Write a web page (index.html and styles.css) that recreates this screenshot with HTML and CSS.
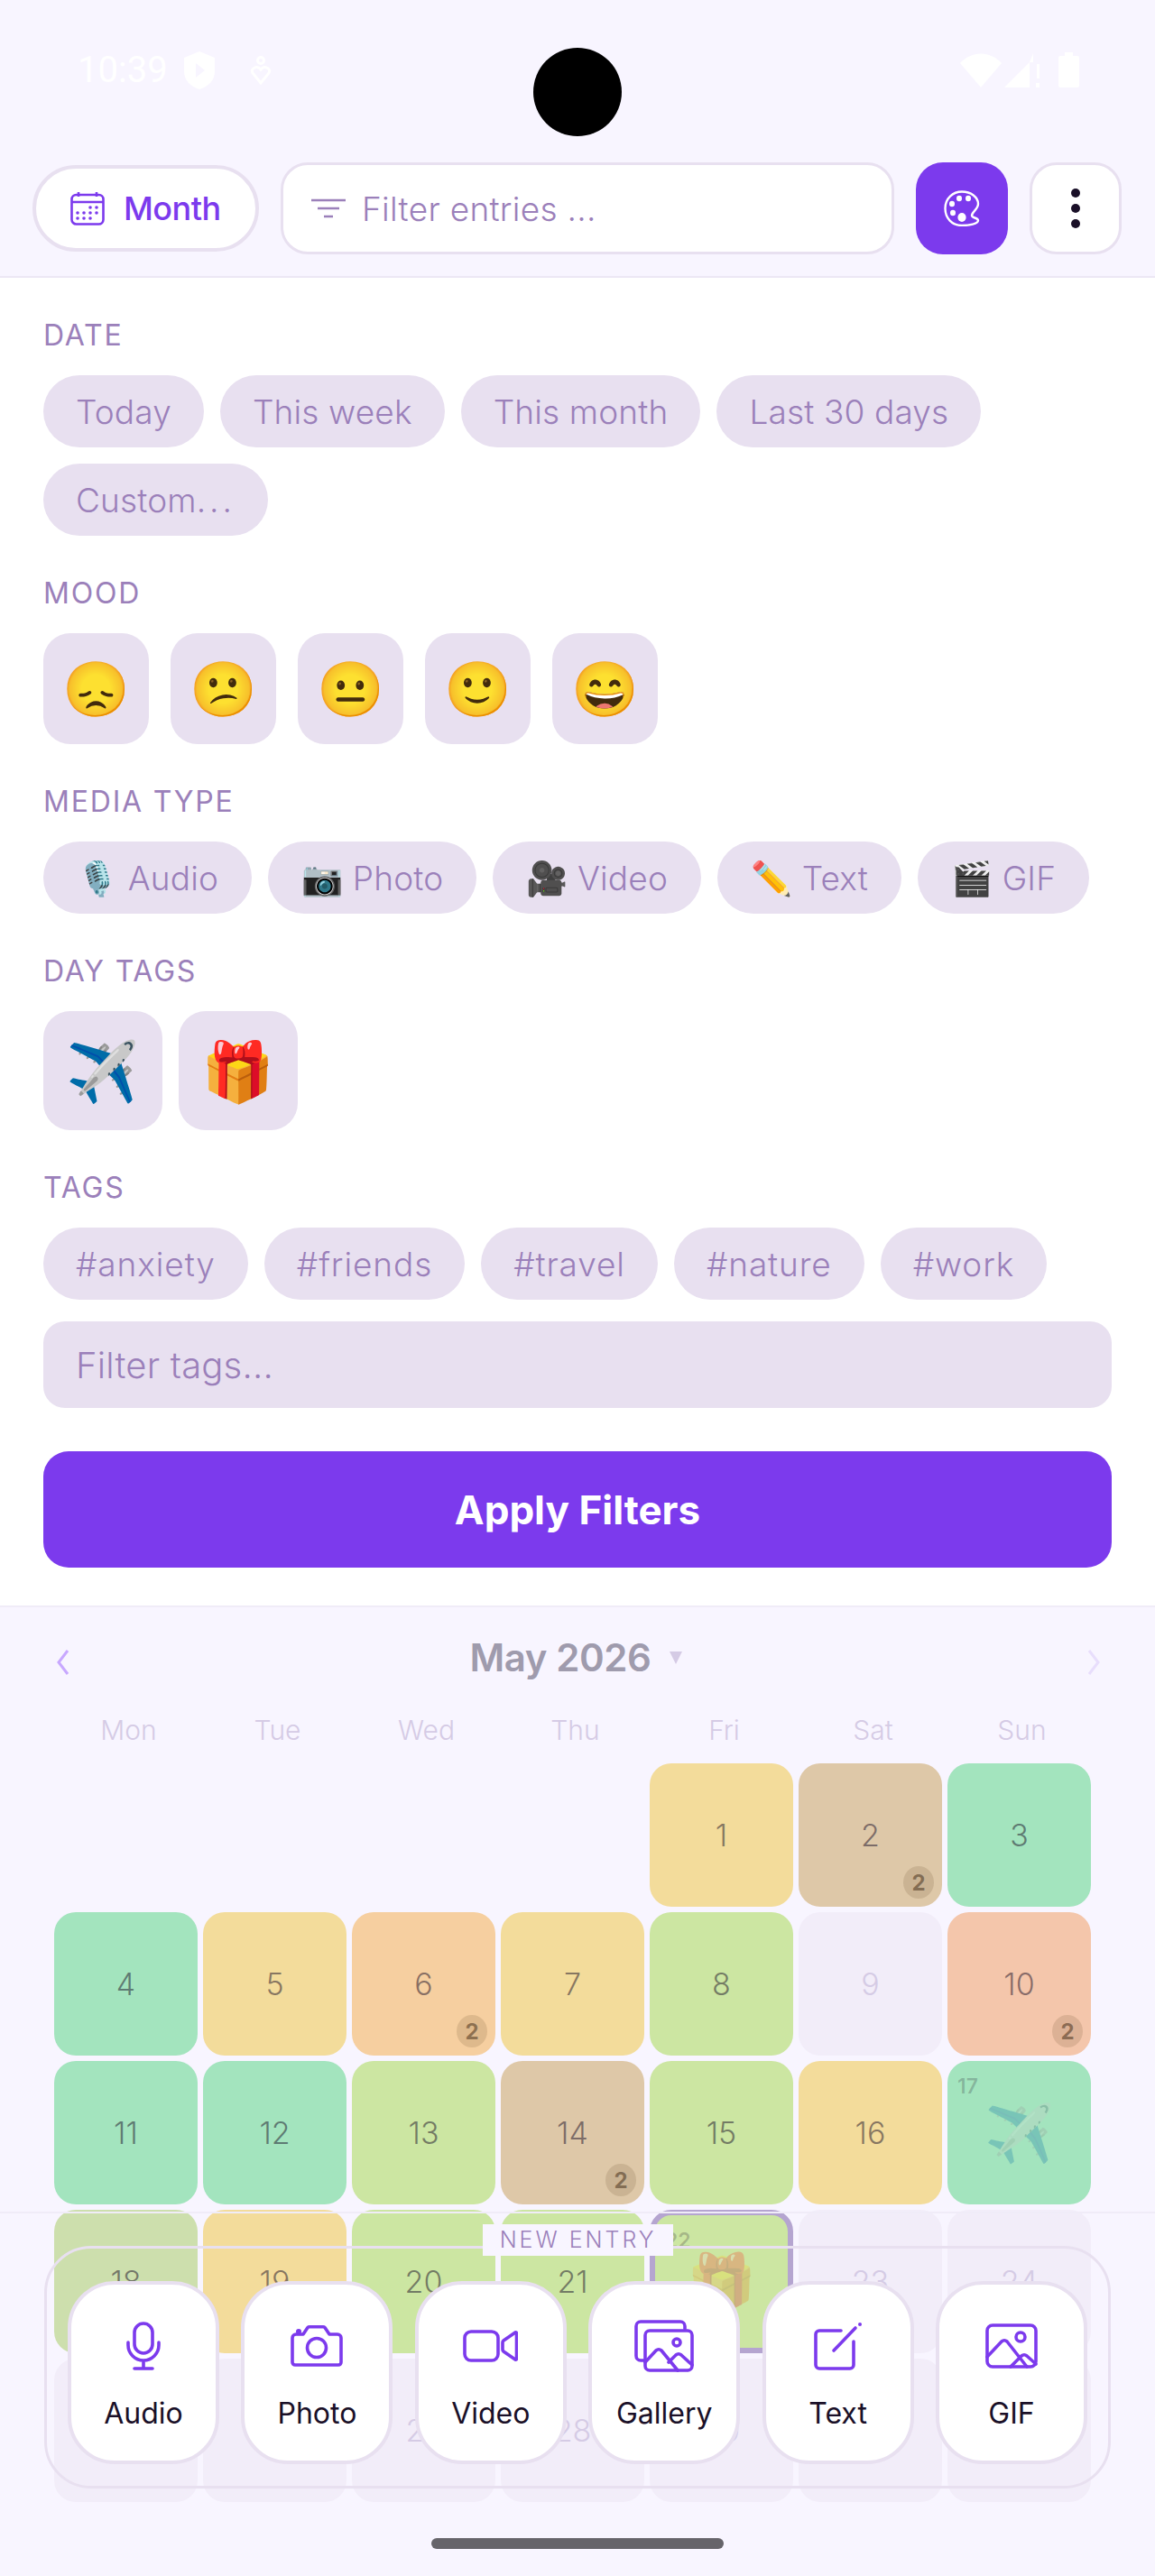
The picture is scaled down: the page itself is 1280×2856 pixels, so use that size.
FILE: index.html
```html
<!DOCTYPE html>
<html lang="en">
<head>
  <meta charset="UTF-8">
  <meta name="viewport" content="width=device-width, initial-scale=1.0">
  <title>Journal</title>
  <link rel="stylesheet" href="styles.css">
</head>
<body>
  <div class="page">

    <!-- Status bar -->
    <div class="status-bar">
      <div class="status-left">
        <span class="status-time">10:39</span>
        <svg class="status-shield" viewBox="0 0 34 42"><path d="M17 0 34 7v15c0 10-7 17-17 20C7 39 0 32 0 22V7z" fill="#fff"/><path d="M13 13l10 8-10 8z" fill="#f8f5ff"/></svg>
        <svg class="status-person" viewBox="0 0 24 32" fill="none" stroke="#fff" stroke-width="3"><circle cx="12" cy="5" r="3.5"/><path d="M12 30 3 19c-3-5 5-9 9-4 4-5 12-1 9 4z"/></svg>
      </div>
      <div class="status-right">
        <svg class="status-wifi" viewBox="0 0 46 38"><path d="M0 11C13-3 33-3 46 11L23 38z" fill="#fff"/></svg>
        <svg class="status-signal" viewBox="0 0 39 38"><path d="M0 38 28 10v28zM32 0v10h-4z" fill="#fff"/><path d="M36 12h3v16h-3zM35 33h4v5h-4z" fill="#fff"/></svg>
        <svg class="status-battery" viewBox="0 0 23 39"><path d="M7 0h9v4h5a2 2 0 0 1 2 2v31a2 2 0 0 1-2 2H2a2 2 0 0 1-2-2V6a2 2 0 0 1 2-2h5z" fill="#fff"/></svg>
      </div>
    </div>
    <div class="camera"></div>

    <!-- Top bar -->
    <div class="top-bar">
      <button class="view-btn">
        <svg class="view-icon" viewBox="0 0 38 38" fill="none" stroke="#7c3aed" stroke-width="2.6">
          <rect x="1.5" y="4" width="35" height="32.5" rx="5"/>
          <path d="M1.5 12h35M9 1v5M29 1v5"/>
          <g fill="#7c3aed" stroke="none">
            <circle cx="22" cy="18" r="1.8"/><circle cx="29" cy="18" r="1.8"/>
            <circle cx="8" cy="24" r="1.8"/><circle cx="15" cy="24" r="1.8"/><circle cx="22" cy="24" r="1.8"/><circle cx="29" cy="24" r="1.8"/>
            <circle cx="8" cy="30" r="1.8"/><circle cx="15" cy="30" r="1.8"/><circle cx="22" cy="30" r="1.8"/>
          </g>
        </svg>
        Month
      </button>
      <div class="search-box">
        <svg class="search-icon" viewBox="0 0 38 22" fill="none" stroke="#9b80ba" stroke-width="2.6"><path d="M0 2h38M7 11h24M14 20h10"/></svg>
        <input class="search-input" type="text" placeholder="Filter entries ...">
      </div>
      <button class="square-btn palette-btn">
        <svg class="palette-icon" viewBox="0 0 40 40" fill="none" stroke="#fff" stroke-width="2.4">
          <path d="M20 1.5C30 1.5 38 7.5 38 15c0 6-7 9-7 13 0 3 7 2 7 5.500C38 37 28 39 20 39 9 39 1.500 31 1.500 20S10 1.500 20 1.500z"/>
          <g fill="#fff" stroke="none">
            <ellipse cx="17" cy="9" rx="3" ry="3.200"/><ellipse cx="27" cy="9" rx="3" ry="3.200"/><ellipse cx="9" cy="15" rx="3" ry="3.200"/><ellipse cx="10" cy="25" rx="3" ry="3.200"/><ellipse cx="20" cy="30" rx="4.600" ry="5"/>
          </g>
        </svg>
      </button>
      <button class="square-btn more-btn">
        <span class="more-dot"></span><span class="more-dot"></span><span class="more-dot"></span>
      </button>
    </div>

    <!-- Filter panel -->
    <div class="filter-panel">
      <div class="filter-group">
        <div class="filter-label">DATE</div>
        <div class="chip-row">
          <span class="chip">Today</span>
          <span class="chip">This week</span>
          <span class="chip">This month</span>
          <span class="chip">Last 30 days</span>
          <span class="chip">Custom<span class="chip-dots">...</span></span>
        </div>
      </div>
      <div class="filter-group">
        <div class="filter-label">MOOD</div>
        <div class="mood-row">
          <span class="mood-btn">😞</span>
          <span class="mood-btn">😕</span>
          <span class="mood-btn">😐</span>
          <span class="mood-btn">🙂</span>
          <span class="mood-btn">😄</span>
        </div>
      </div>
      <div class="filter-group">
        <div class="filter-label">MEDIA TYPE</div>
        <div class="chip-row">
          <span class="chip chip-media">🎙️ Audio</span>
          <span class="chip chip-media">📷 Photo</span>
          <span class="chip chip-media">🎥 Video</span>
          <span class="chip chip-media">✏️ Text</span>
          <span class="chip chip-media">🎬 GIF</span>
        </div>
      </div>
      <div class="filter-group">
        <div class="filter-label">DAY TAGS</div>
        <div class="chip-row">
          <span class="tag-btn">✈️</span>
          <span class="tag-btn">🎁</span>
        </div>
      </div>
      <div class="filter-group">
        <div class="filter-label">TAGS</div>
        <div class="chip-row">
          <span class="chip chip-tag">#anxiety</span>
          <span class="chip chip-tag">#friends</span>
          <span class="chip chip-tag">#travel</span>
          <span class="chip chip-tag">#nature</span>
          <span class="chip chip-tag">#work</span>
        </div>
        <input class="tag-input" type="text" placeholder="Filter tags...">
      </div>
      <button class="apply-btn">Apply Filters</button>
    </div>

    <!-- Calendar -->
    <div class="calendar">
      <div class="cal-header">
        <svg class="cal-nav" viewBox="0 0 16 28" fill="none" stroke="#c8a8ff" stroke-width="3"><path d="M13 1 3 14l10 13"/></svg>
        <div class="cal-title">May 2026 <span class="cal-caret"></span></div>
        <svg class="cal-nav" viewBox="0 0 16 28" fill="none" stroke="#e8defc" stroke-width="3"><path d="M3 1l10 13L3 27"/></svg>
      </div>
      <div class="cal-weekdays">
        <span>Mon</span><span>Tue</span><span>Wed</span><span>Thu</span><span>Fri</span><span>Sat</span><span>Sun</span>
      </div>
      <div class="cal-grid">
        <div></div><div></div><div></div><div></div>
        <div class="day yellow">1</div>
        <div class="day tan">2<span class="day-badge">2</span></div>
        <div class="day green">3</div>
        <div class="day green">4</div>
        <div class="day yellow">5</div>
        <div class="day orange">6<span class="day-badge">2</span></div>
        <div class="day yellow">7</div>
        <div class="day lime">8</div>
        <div class="day empty">9</div>
        <div class="day salmon">10<span class="day-badge">2</span></div>
        <div class="day green">11</div>
        <div class="day green">12</div>
        <div class="day lime">13</div>
        <div class="day tan">14<span class="day-badge">2</span></div>
        <div class="day lime">15</div>
        <div class="day yellow">16</div>
        <div class="day green"><span class="day-small">17</span><span class="day-emoji">✈️</span></div>
        <div class="day olive">18</div>
        <div class="day yellow">19</div>
        <div class="day lime">20</div>
        <div class="day lime">21</div>
        <div class="day lime selected"><span class="day-small">22</span><span class="day-emoji">🎁</span></div>
        <div class="day empty">23</div>
        <div class="day empty">24</div>
        <div class="day empty">25</div>
        <div class="day empty">26</div>
        <div class="day empty">27</div>
        <div class="day empty">28</div>
        <div class="day empty">29</div>
        <div class="day empty">30</div>
        <div class="day empty">31</div>
      </div>
    </div>

    <!-- New entry bar, sits over the calendar -->
    <div class="entry-bar">
      <div class="entry-box">
        <span class="entry-title">NEW ENTRY</span>
        <button class="entry-btn">
          <span class="entry-icon">
            <svg width="38" height="54" viewBox="0 0 38 54" fill="none" stroke="#7c3aed" stroke-width="3.6" stroke-linecap="round"><rect x="9" y="2" width="20" height="33" rx="10"/><path d="M2 23v3a17 17 0 0 0 34 0v-3M19 43v9M9 52h20"/></svg>
          </span>
          Audio
        </button>
        <button class="entry-btn">
          <span class="entry-icon">
            <svg width="58" height="46" viewBox="0 0 58 46" fill="none" stroke="#7c3aed" stroke-width="3.600" stroke-linejoin="round"><path d="M2 14a4 4 0 0 1 4-4h8l5-7.500q.7-.7 2-.7h15q1.300 0 2 .7l5 7.500h9a4 4 0 0 1 4 4v27a3 3 0 0 1-3 3H5a3 3 0 0 1-3-3z"/><ellipse cx="29" cy="25" rx="10.500" ry="10.500"/><circle cx="9" cy="7" r="3" fill="#7c3aed" stroke="none"/></svg>
          </span>
          Photo
        </button>
        <button class="entry-btn">
          <span class="entry-icon">
            <svg width="61" height="36" viewBox="0 0 61 36" fill="none" stroke="#7c3aed" stroke-width="3.600" stroke-linejoin="round"><rect x="2" y="2" width="37" height="32" rx="7"/><path d="M45 12 58 3q1.500-.5 1.500 1v28q0 1.500-1.500 1L45 24q-1-1-1-2v-8q0-1 1-2z"/></svg>
          </span>
          Video
        </button>
        <button class="entry-btn">
          <span class="entry-icon">
            <svg width="66" height="58" viewBox="0 0 66 58" fill="none" stroke="#7c3aed" stroke-width="3.600" stroke-linejoin="round" stroke-linecap="round"><path d="M56 10V7a5 5 0 0 0-5-5H7a5 5 0 0 0-5 5v33a5 5 0 0 0 5 5h5"/><rect x="12" y="12" width="52" height="44" rx="5"/><circle cx="47" cy="25" r="4"/><path d="M12 47l12-13q3-2.500 6 0l18 22M38 47l8-8q3-2.500 6 0l12 11"/></svg>
          </span>
          Gallery
        </button>
        <button class="entry-btn">
          <span class="entry-icon">
            <svg width="54" height="54" viewBox="0 0 54 54" fill="none" stroke="#7c3aed" stroke-width="3.600" stroke-linecap="round"><path d="M30 10H6a4 4 0 0 0-4 4v34a4 4 0 0 0 4 4h34a4 4 0 0 0 4-4V22"/><path d="M22 32 46 7"/><circle cx="51" cy="3" r="2" fill="#7c3aed" stroke="none"/></svg>
          </span>
          Text
        </button>
        <button class="entry-btn">
          <span class="entry-icon">
            <svg width="58" height="50" viewBox="0 0 58 50" fill="none" stroke="#7c3aed" stroke-width="3.600" stroke-linecap="round" stroke-linejoin="round"><rect x="2" y="2" width="54" height="46" rx="6"/><circle cx="39" cy="15" r="5"/><path d="M2 37l16-17q3-2.500 6 0l22 28M28 48l12-12q3-2.500 6 0l10 9"/></svg>
          </span>
          GIF
        </button>
      </div>
      <div class="home-indicator"></div>
    </div>

  </div>
</body>
</html>
```

FILE: styles.css
```css
* {
  box-sizing: border-box;
}

body {
  margin: 0;
  font-family: 'Inter', 'Noto Color Emoji', sans-serif;
  background: #f8f5ff;
  color: #1a1028;
}

button {
  font-family: inherit;
  padding: 0;
  cursor: pointer;
}

.page {
  position: relative;
  width: 1280px;
  height: 2856px;
  overflow: hidden;
}

/* Status bar */
.status-bar {
  height: 180px;
  padding: 57px 84px 0 86px;
  display: flex;
  justify-content: space-between;
  align-items: flex-start;
}

.status-left {
  display: flex;
  align-items: center;
}

.status-time {
  font-family: 'Roboto', sans-serif;
  font-size: 40px;
  line-height: 42px;
  color: #fff;
}

.status-shield {
  width: 34px;
  height: 42px;
  margin-left: 18px;
}

.status-person {
  width: 24px;
  height: 32px;
  margin-left: 39px;
}

.status-right {
  display: flex;
  align-items: center;
  padding-top: 1px;
}

.status-wifi {
  width: 46px;
  height: 38px;
}

.status-signal {
  width: 39px;
  height: 38px;
  margin-left: 3px;
}

.status-battery {
  width: 23px;
  height: 39px;
  margin-left: 21px;
}

.camera {
  position: absolute;
  top: 53px;
  left: 591px;
  width: 98px;
  height: 98px;
  border-radius: 50%;
  background: #000;
}

/* Top bar */
.top-bar {
  height: 128px;
  padding: 0 37px 24px 36px;
  display: flex;
  align-items: center;
  gap: 24px;
  border-bottom: 2px solid #ece7f5;
}

.view-btn {
  width: 251px;
  height: 96px;
  display: flex;
  align-items: center;
  gap: 21px;
  padding-left: 38px;
  background: #fff;
  border: 4px solid #e8e0f0;
  border-radius: 48px;
  color: #7c3aed;
  font-size: 36px;
  font-weight: 500;
  letter-spacing: -0.5px;
}

.view-icon {
  width: 38px;
  height: 38px;
}

.search-box {
  flex: 1;
  height: 102px;
  display: flex;
  align-items: center;
  gap: 18px;
  padding-left: 31px;
  background: #fff;
  border: 3px solid #e8e0f0;
  border-radius: 30px;
}

.search-icon {
  width: 38px;
  height: 22px;
}

.search-input {
  flex: 1;
  border: none;
  outline: none;
  background: none;
  font-family: inherit;
  font-size: 37px;
  font-weight: 300;
  letter-spacing: 0.3px;
  padding: 0;
}

.search-input::placeholder,
.tag-input::placeholder {
  color: #9b80ba;
  opacity: 1;
}

.square-btn {
  width: 102px;
  height: 102px;
  flex: none;
  border-radius: 30px;
  display: flex;
  align-items: center;
  justify-content: center;
}

.palette-btn {
  background: #7c3aed;
  border: none;
}

.palette-icon {
  width: 40px;
  height: 40px;
}

.more-btn {
  background: #fff;
  border: 3px solid #e8e0f0;
  flex-direction: column;
  gap: 7px;
}

.more-dot {
  width: 10px;
  height: 10px;
  border-radius: 50%;
  background: #1a1028;
}

/* Filter panel */
.filter-panel {
  height: 1474px;
  padding: 44px 48px 0;
  background: #fff;
  border-bottom: 2px solid #f0ecf8;
}

.filter-group {
  margin-bottom: 44px;
}

.filter-label {
  height: 40px;
  line-height: 40px;
  margin-bottom: 24px;
  font-size: 32px;
  font-weight: 400;
  letter-spacing: 1.8px;
  color: #9b80ba;
}

.chip-row {
  display: flex;
  flex-wrap: wrap;
  gap: 18px;
}

.chip {
  height: 80px;
  padding: 0 36px;
  display: flex;
  align-items: center;
  background: #e8e0f0;
  border-radius: 40px;
  font-size: 37px;
  font-weight: 300;
  letter-spacing: 0.15px;
  color: #9b80ba;
  white-space: pre;
}

.chip-dots {
  letter-spacing: 4px;
}

.chip-media {
  padding: 0 37px;
}

.chip-tag {
  letter-spacing: 0.9px;
}

.mood-row {
  display: flex;
  gap: 24px;
}

.mood-btn {
  width: 117px;
  height: 123px;
  display: flex;
  align-items: center;
  justify-content: center;
  background: #e8e0f0;
  border-radius: 30px;
  font-size: 60px;
}

.tag-btn {
  width: 132px;
  height: 132px;
  display: flex;
  align-items: center;
  justify-content: center;
  background: #e8e0f0;
  border-radius: 30px;
  font-size: 65px;
}

.tag-input {
  display: block;
  width: 100%;
  height: 96px;
  margin-top: 24px;
  padding: 0 36px;
  border: none;
  outline: none;
  border-radius: 24px;
  background: #e8e0f0;
  font-family: inherit;
  font-size: 40px;
  font-weight: 300;
  letter-spacing: 0.2px;
}

.apply-btn {
  display: block;
  width: 100%;
  height: 129px;
  margin-top: 48px;
  border: none;
  border-radius: 28px;
  background: #7c3aed;
  color: #fff;
  font-size: 44px;
  font-weight: 700;
}

.filter-group:last-of-type {
  margin-bottom: 0;
}

/* Calendar */
.calendar {
  padding-top: 30px;
}

.cal-header {
  height: 52px;
  padding: 0 60px 0 62px;
  display: flex;
  justify-content: space-between;
  align-items: flex-end;
}

.cal-nav {
  width: 16px;
  height: 28px;
  margin-bottom: 7px;
}

.cal-title {
  margin-right: 6px;
  font-size: 42px;
  font-weight: 600;
  line-height: 52px;
  letter-spacing: -0.4px;
  color: #9f9bad;
  display: flex;
  align-items: center;
  gap: 20px;
}

.cal-caret {
  width: 0;
  height: 0;
  border-left: 7px solid transparent;
  border-right: 7px solid transparent;
  border-top: 14px solid #d5cbe5;
}

.cal-weekdays {
  margin: 36px 0 19px 63px;
  display: grid;
  grid-template-columns: repeat(7, 159px);
  gap: 6px;
  line-height: 36px;
  font-size: 30px;
  font-weight: 300;
  text-align: center;
  color: #d5cbe5;
}

.cal-grid {
  margin-left: 60px;
  display: grid;
  grid-template-columns: repeat(7, 159px);
  grid-auto-rows: 159px;
  gap: 6px;
}

.day {
  position: relative;
  display: flex;
  align-items: center;
  justify-content: center;
  border-radius: 24px;
  font-size: 34px;
  font-weight: 300;
  color: rgba(26, 16, 40, 0.5);
}

.yellow { background: #f3dc9b; }
.tan { background: #dec8a8; }
.green { background: #a3e4be; }
.lime { background: #cce6a2; }
.orange { background: #f6cfa0; }
.salmon { background: #f4c6ab; }
.olive { background: #cddfad; }

.empty {
  background: #f2edf9;
  color: #d5cbe5;
}

.day-badge {
  position: absolute;
  right: 9px;
  bottom: 9px;
  width: 34px;
  height: 36px;
  display: flex;
  align-items: center;
  justify-content: center;
  border-radius: 50%;
  background: rgba(90, 60, 30, 0.15);
  font-size: 24px;
  font-weight: 700;
  color: rgba(60, 40, 20, 0.5);
}

.day-small {
  position: absolute;
  top: 14px;
  left: 11px;
  font-size: 23px;
  font-weight: 600;
  color: rgba(26, 16, 40, 0.22);
}

.day-emoji {
  font-size: 62px;
  opacity: 0.5;
}

.selected {
  border: 6px solid #b5a5d0;
}

/* New entry bar */
.entry-bar {
  position: absolute;
  left: 0;
  right: 0;
  bottom: 0;
  height: 404px;
  padding: 36px 49px 0;
  border-top: 2px solid #f0ecf8;
}

.entry-box {
  position: relative;
  height: 269px;
  padding: 36px 23px 0;
  display: flex;
  justify-content: space-between;
  align-items: flex-start;
  border: 3px solid #e8e0f0;
  border-radius: 52px;
}

.entry-title {
  position: absolute;
  top: -27px;
  left: 483px;
  width: 211px;
  height: 35px;
  line-height: 35px;
  text-align: center;
  background: #f8f5ff;
  font-size: 25px;
  font-weight: 300;
  letter-spacing: 3px;
  color: #9b80ba;
}

.entry-btn {
  width: 168px;
  height: 203px;
  padding-top: 39px;
  display: flex;
  flex-direction: column;
  align-items: center;
  background: #fff;
  border: 4px solid #e8e0f0;
  border-radius: 52px;
  font-size: 32px;
  line-height: 40px;
  color: #1a1028;
}

.entry-icon {
  height: 58px;
  margin-bottom: 26px;
  display: flex;
  align-items: center;
}

.home-indicator {
  position: absolute;
  left: 478px;
  bottom: 30px;
  width: 324px;
  height: 12px;
  border-radius: 6px;
  background: #66646a;
}
```
